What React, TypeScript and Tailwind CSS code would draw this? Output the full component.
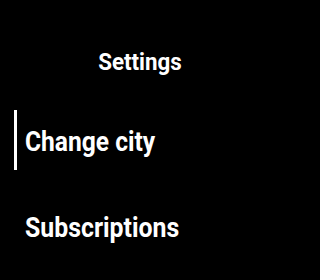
export default function App() {
  return (
    <div className="w-screen h-screen bg-black">
      <div
        className="w-[280px] h-[280px] bg-black text-white overflow-hidden flex flex-col"
        style={{ fontFamily: 'Roboto, "Noto Sans", sans-serif' }}
      >
        <div className="mt-[46px] h-[32px] flex justify-center">
          <span className="text-[24px] font-bold leading-[32px] scale-x-[0.93]">Settings</span>
        </div>
        <div className="mt-[32px] flex h-[60px]">
          <div className="ml-[14px] w-[3px] bg-white" />
          <div className="ml-[8px] pt-[16px]">
            <span className="block text-[27px] font-bold leading-[32px] scale-x-[0.91] origin-left">Change city</span>
          </div>
        </div>
        <div className="mt-[42px] pl-[25px]">
          <span className="block text-[27px] font-bold leading-[32px] scale-x-[0.92] origin-left">Subscriptions</span>
        </div>
      </div>
    </div>
  );
}
